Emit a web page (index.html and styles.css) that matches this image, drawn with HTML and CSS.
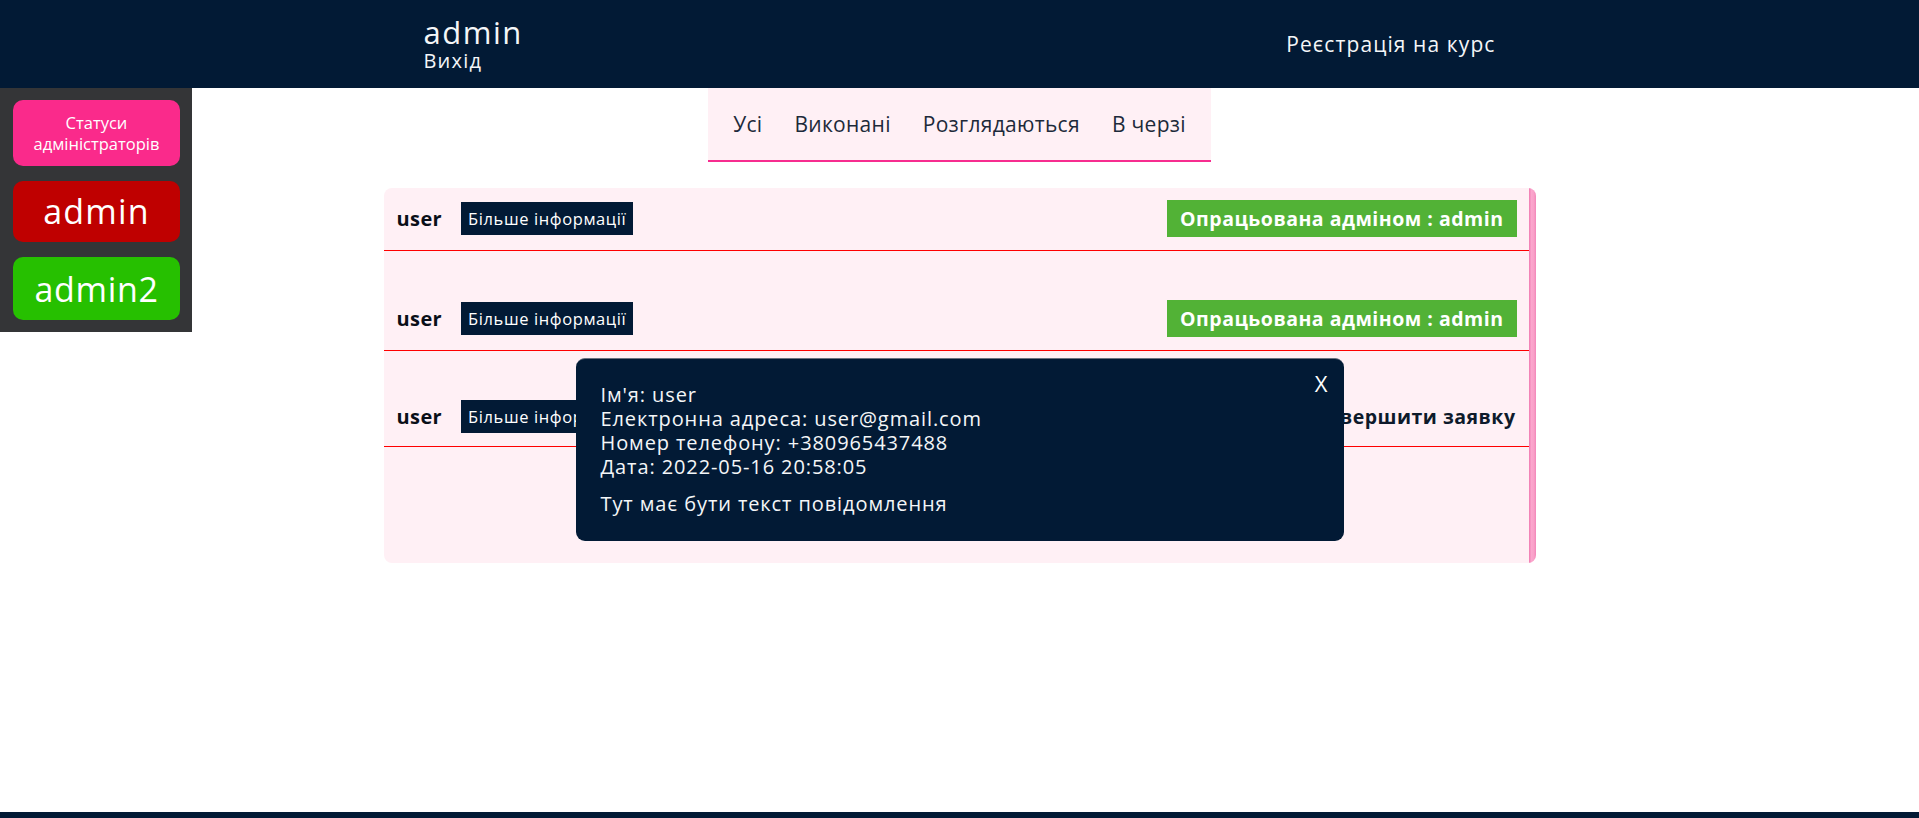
FILE: index.html
```html
<!DOCTYPE html>
<html lang="uk">
<head>
<meta charset="utf-8">
<title>Заявки</title>
<link rel="stylesheet" href="styles.css">
</head>
<body>
<header class="topbar">
  <div class="topbar-inner">
    <div class="user-block">
      <div class="user-name">admin</div>
      <a class="logout" href="#">Вихід</a>
    </div>
    <a class="register" href="#">Реєстрація на курс</a>
  </div>
</header>

<div class="layout">
  <aside class="sidebar">
    <button class="side-btn side-status">Статуси адміністраторів</button>
    <button class="side-btn side-admin">admin</button>
    <button class="side-btn side-admin2">admin2</button>
  </aside>

  <main class="content">
    <nav class="tabs">
      <a class="tab" href="#">Усі</a>
      <a class="tab" href="#">Виконані</a>
      <a class="tab" href="#">Розглядаються</a>
      <a class="tab" href="#">В черзі</a>
    </nav>

    <section class="panel">
      <div class="rows">
        <div class="row">
          <span class="row-user">user</span>
          <button class="more-btn">Більше інформації</button>
          <span class="badge-done">Опрацьована адміном : admin</span>
        </div>
        <div class="row">
          <span class="row-user">user</span>
          <button class="more-btn">Більше інформації</button>
          <span class="badge-done">Опрацьована адміном : admin</span>
        </div>
        <div class="row">
          <span class="row-user">user</span>
          <button class="more-btn">Більше інформації</button>
          <button class="finish-btn">Завершити заявку</button>
        </div>
      </div>
      <div class="scroll-strip"></div>
    </section>
  </main>

  <div class="spacer"></div>
</div>

<footer class="footer"></footer>

<div class="modal">
  <button class="modal-close">X</button>
  <div class="modal-info">
    <div>Ім'я: user</div>
    <div>Електронна адреса: user@gmail.com</div>
    <div>Номер телефону: +380965437488</div>
    <div>Дата: 2022-05-16 20:58:05</div>
  </div>
  <p class="modal-msg">Тут має бути текст повідомлення</p>
</div>
</body>
</html>
```

FILE: styles.css
```css
* { box-sizing: border-box; }

html, body {
  margin: 0;
  height: 818px;
  overflow: hidden;
}

body {
  font-family: "Open Sans", "Noto Sans", sans-serif;
  background: #ffffff;
  color: #021a35;
}

a { text-decoration: none; color: inherit; }
button { font-family: inherit; border: 0; cursor: pointer; }

/* ---------- top bar ---------- */
.topbar {
  height: 88px;
  background: #021a35;
  color: #f4f6f8;
}

.topbar-inner {
  width: 1072px;
  height: 100%;
  margin: 0 auto;
  display: flex;
  align-items: center;
  justify-content: space-between;
}

.user-block {
  display: flex;
  flex-direction: column;
}

.user-name {
  font-size: 31px;
  line-height: 34px;
  letter-spacing: 1.5px;
}

.logout {
  font-size: 20px;
  line-height: 24px;
  letter-spacing: 1.2px;
}

.register {
  font-size: 21px;
  line-height: 28px;
  letter-spacing: 1.1px;
}

/* ---------- layout ---------- */
.layout {
  height: 724px;
  display: grid;
  grid-template-columns: 192px 1fr 192px;
  align-items: start;
}

.sidebar {
  height: 244px;
  background: #343537;
  padding: 12px 12px 12px 13px;
  display: flex;
  flex-direction: column;
  gap: 15px;
}

.side-btn {
  width: 167px;
  border-radius: 10px;
  color: #ffffff;
}

.side-status {
  height: 66px;
  background: #fa2a8b;
  font-size: 16.5px;
  line-height: 21px;
  padding: 0 2px;
}

.side-admin {
  height: 62px;
  background: #bf0000;
  font-size: 34px;
  letter-spacing: 1.2px;
}

.side-admin2 {
  height: 63px;
  background: #26c000;
  font-size: 34px;
  letter-spacing: 0.7px;
}

/* ---------- content ---------- */
.content {
  display: flex;
  flex-direction: column;
  align-items: center;
}

.tabs {
  height: 74px;
  display: flex;
  align-items: center;
  padding: 0 9px;
  background: #fff0f5;
  border-bottom: 2px solid #f72c8f;
}

.tab {
  padding: 0 16px;
  font-size: 21px;
  letter-spacing: 0.3px;
  color: #1d2a3a;
}

.panel {
  width: 1152px;
  height: 375px;
  margin-top: 26px;
  background: #fff0f5;
  border-radius: 8px;
  overflow: hidden;
  display: flex;
}

.rows {
  flex: 1;
}

.row {
  display: flex;
  align-items: center;
  padding: 12px 12px 13px 13px;
  border-bottom: 1px solid #ff0000;
}

.row + .row {
  padding-top: 49px;
}

.row:last-child {
  padding-top: 47px;
  padding-bottom: 11px;
}

.row-user {
  font-size: 20px;
  font-weight: 700;
  letter-spacing: 0.4px;
  color: #0a0f18;
  margin-right: 19px;
}

.more-btn {
  height: 33px;
  padding: 0 7px;
  background: #021a35;
  color: #ffffff;
  font-size: 16.5px;
  letter-spacing: 0.6px;
}

.badge-done {
  margin-left: auto;
  height: 37px;
  line-height: 37px;
  padding: 0 13px;
  background: #52b236;
  color: #ffffff;
  font-size: 19.5px;
  font-weight: 700;
  letter-spacing: 0.5px;
}

.finish-btn {
  margin-left: auto;
  height: 37px;
  padding: 0 1px 0 13px;
  background: transparent;
  color: #0e1a2b;
  font-size: 19.5px;
  font-weight: 700;
  letter-spacing: 0.5px;
}

.scroll-strip {
  width: 7px;
  background: linear-gradient(to right, #f07ab1, #fba6cd 35%, #f9a0c8 70%, #f286b9);
}

/* ---------- footer ---------- */
.footer {
  height: 6px;
  background: #021a35;
}

/* ---------- modal ---------- */
.modal {
  position: fixed;
  top: 358px;
  left: 50%;
  transform: translateX(-50%);
  width: 768px;
  height: 183px;
  padding: 24px 25px 25px;
  background: #021a35;
  color: #f4f6f8;
  border-radius: 9px;
  border-top: 1px solid #6b7380;
  font-size: 20px;
  line-height: 24px;
  letter-spacing: 0.9px;
}

.modal-close {
  position: absolute;
  top: 10px;
  right: 16px;
  background: transparent;
  color: #ffffff;
  font-size: 22px;
  line-height: 28px;
  padding: 0;
}

.modal-msg {
  margin: 13px 0 0;
}
```
